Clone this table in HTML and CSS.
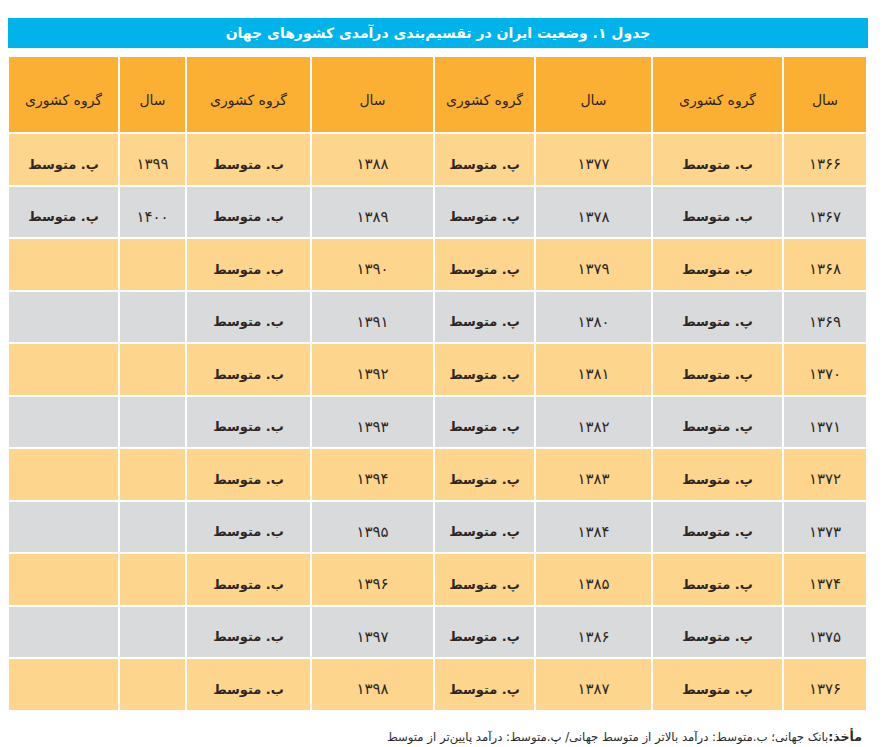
FILE: index.html
```html
<!DOCTYPE html>
<html lang="fa" dir="rtl">
<head>
<meta charset="utf-8">
<title>جدول ۱</title>
<link rel="stylesheet" href="styles.css">
</head>
<body>
<div class="page">
  <div class="title">جدول ۱. وضعیت ایران در تقسیم‌بندی درآمدی کشورهای جهان</div>
  <div class="grid">
    <div class="hd">سال</div><div class="hd">گروه کشوری</div><div class="hd">سال</div><div class="hd">گروه کشوری</div><div class="hd">سال</div><div class="hd">گروه کشوری</div><div class="hd">سال</div><div class="hd">گروه کشوری</div>

    <div class="c o n">۱۳۶۶</div><div class="c o g">ب. متوسط</div><div class="c o n">۱۳۷۷</div><div class="c o g">پ. متوسط</div><div class="c o n">۱۳۸۸</div><div class="c o g">ب. متوسط</div><div class="c o n">۱۳۹۹</div><div class="c o g">پ. متوسط</div>
    <div class="c s n">۱۳۶۷</div><div class="c s g">ب. متوسط</div><div class="c s n">۱۳۷۸</div><div class="c s g">پ. متوسط</div><div class="c s n">۱۳۸۹</div><div class="c s g">ب. متوسط</div><div class="c s n">۱۴۰۰</div><div class="c s g">پ. متوسط</div>
    <div class="c o n">۱۳۶۸</div><div class="c o g">ب. متوسط</div><div class="c o n">۱۳۷۹</div><div class="c o g">پ. متوسط</div><div class="c o n">۱۳۹۰</div><div class="c o g">ب. متوسط</div><div class="c o n"></div><div class="c o g"></div>
    <div class="c s n">۱۳۶۹</div><div class="c s g">پ. متوسط</div><div class="c s n">۱۳۸۰</div><div class="c s g">پ. متوسط</div><div class="c s n">۱۳۹۱</div><div class="c s g">ب. متوسط</div><div class="c s n"></div><div class="c s g"></div>
    <div class="c o n">۱۳۷۰</div><div class="c o g">پ. متوسط</div><div class="c o n">۱۳۸۱</div><div class="c o g">پ. متوسط</div><div class="c o n">۱۳۹۲</div><div class="c o g">ب. متوسط</div><div class="c o n"></div><div class="c o g"></div>
    <div class="c s n">۱۳۷۱</div><div class="c s g">پ. متوسط</div><div class="c s n">۱۳۸۲</div><div class="c s g">پ. متوسط</div><div class="c s n">۱۳۹۳</div><div class="c s g">ب. متوسط</div><div class="c s n"></div><div class="c s g"></div>
    <div class="c o n">۱۳۷۲</div><div class="c o g">پ. متوسط</div><div class="c o n">۱۳۸۳</div><div class="c o g">پ. متوسط</div><div class="c o n">۱۳۹۴</div><div class="c o g">ب. متوسط</div><div class="c o n"></div><div class="c o g"></div>
    <div class="c s n">۱۳۷۳</div><div class="c s g">پ. متوسط</div><div class="c s n">۱۳۸۴</div><div class="c s g">پ. متوسط</div><div class="c s n">۱۳۹۵</div><div class="c s g">ب. متوسط</div><div class="c s n"></div><div class="c s g"></div>
    <div class="c o n">۱۳۷۴</div><div class="c o g">پ. متوسط</div><div class="c o n">۱۳۸۵</div><div class="c o g">پ. متوسط</div><div class="c o n">۱۳۹۶</div><div class="c o g">ب. متوسط</div><div class="c o n"></div><div class="c o g"></div>
    <div class="c s n">۱۳۷۵</div><div class="c s g">پ. متوسط</div><div class="c s n">۱۳۸۶</div><div class="c s g">پ. متوسط</div><div class="c s n">۱۳۹۷</div><div class="c s g">ب. متوسط</div><div class="c s n"></div><div class="c s g"></div>
    <div class="c o n">۱۳۷۶</div><div class="c o g">پ. متوسط</div><div class="c o n">۱۳۸۷</div><div class="c o g">پ. متوسط</div><div class="c o n">۱۳۹۸</div><div class="c o g">ب. متوسط</div><div class="c o n"></div><div class="c o g"></div>
  </div>
  <div class="source"><b>مأخذ:</b>بانک جهانی؛ ب.متوسط: درآمد بالاتر از متوسط جهانی/ پ.متوسط: درآمد پایین‌تر از متوسط</div>
</div>
</body>
</html>
```

FILE: styles.css
```css
html, body {
  margin: 0;
  padding: 0;
  background: #ffffff;
}
body {
  font-family: "DejaVu Sans", sans-serif;
  color: #2e2622;
}
.page {
  width: 860px;
  padding: 18px 0 0 0;
  margin: 0 auto 0 8px;
  direction: rtl;
}
.title {
  height: 30px;
  background: #00b3ea;
  color: #ffffff;
  font-size: 14px;
  font-weight: bold;
  line-height: 30px;
  text-align: center;
}
.grid {
  margin: 9px 2px 0 1px;
  display: grid;
  grid-template-columns: 82px 129px 115px 99px 121px 123px 65px 109px;
  grid-template-rows: 75px repeat(11, 50.5px);
  gap: 2px;
  background: #ffffff;
}
.hd {
  background: #fbb034;
  display: flex;
  align-items: center;
  justify-content: center;
  padding-top: 10px;
  font-size: 14px;
}
.c {
  display: flex;
  align-items: center;
  justify-content: center;
  padding-top: 10px;
}
.o { background: #fdd58d; }
.s { background: #d9dadc; }
.n {
  font-size: 15px;
  letter-spacing: 1.5px;
}
.g {
  font-size: 13px;
  font-weight: bold;
}
.source {
  margin-top: 19px;
  padding-right: 6px;
  font-size: 11.7px;
  color: #2a2a2a;
  text-align: right;
}
.source b {
  font-weight: bold;
  font-size: 12.5px;
}
```
